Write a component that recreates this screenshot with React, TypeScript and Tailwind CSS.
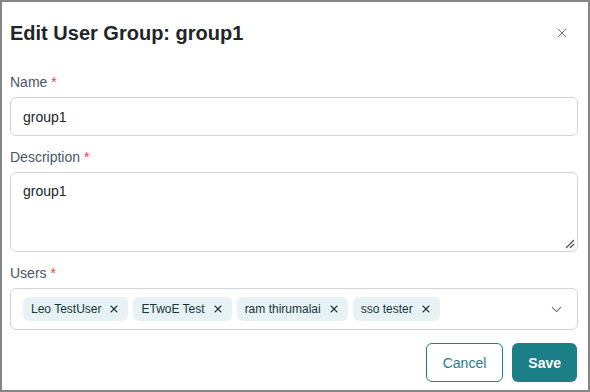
import { X, ChevronDown } from "lucide-react";

const users = ["Leo TestUser", "ETwoE Test", "ram thirumalai", "sso tester"];

function Label({ text }: { text: string }) {
  return (
    <label className="mb-[5px] block text-sm leading-5 text-[#4b5563]">
      {text} <span className="text-[#ef4444]">*</span>
    </label>
  );
}

export default function App() {
  return (
    <div
      className="h-[392px] w-[590px] border-2 border-[#868686] bg-white pl-2 pr-[10px] text-[#1f2328]"
      style={{ fontFamily: '"Liberation Sans", Arial, sans-serif' }}
    >
      {/* header */}
      <div className="flex items-center justify-between pt-[17px]">
        <h2 className="text-[20px] font-bold leading-7 text-[#212529]">Edit User Group: group1</h2>
        <button className="mr-[4px] flex h-6 w-6 items-center justify-center text-[#6b7280]">
          <X size={16} strokeWidth={1.5} />
        </button>
      </div>

      <div className="mt-[25px] flex flex-col gap-[11px]">
        <div>
          <Label text="Name" />
          <div className="flex h-[39px] items-center rounded-md border border-[#d1d5db] px-3 text-sm text-[#212529]">
            group1
          </div>
        </div>

        <div>
          <Label text="Description" />
          <div className="relative h-[80px] rounded-md border border-[#d1d5db] px-3 pt-2 text-sm leading-5 text-[#212529]">
            group1
            <svg className="absolute bottom-[2px] right-[2px]" width="10" height="10" viewBox="0 0 10 10">
              <path d="M9 1 1 9M9 5 5 9" stroke="#555" strokeWidth="1.3" />
            </svg>
          </div>
        </div>

        <div>
          <Label text="Users" />
          <div className="flex h-[42px] items-center rounded-md border border-[#d1d5db] pl-3 pr-3">
            <div className="flex flex-1 gap-[5px]">
              {users.map((u) => (
                <span
                  key={u}
                  className="flex h-6 items-center gap-[7px] rounded-md bg-[#e6f2f4] pl-2 pr-2 text-xs text-[#17353a]"
                >
                  {u}
                  <X size={12} strokeWidth={2.2} />
                </span>
              ))}
            </div>
            <ChevronDown size={17} strokeWidth={1.5} className="text-[#6b7280]" />
          </div>
        </div>
      </div>

      {/* footer */}
      <div className="mt-[13px] flex justify-end gap-[9px] pr-[1px]">
        <button className="h-[39px] rounded-md border border-[#1b7f88] px-4 text-sm text-[#1b7f88]">
          Cancel
        </button>
        <button className="h-[39px] rounded-md bg-[#1b7f88] px-4 text-sm font-bold text-white">
          Save
        </button>
      </div>
    </div>
  );
}
